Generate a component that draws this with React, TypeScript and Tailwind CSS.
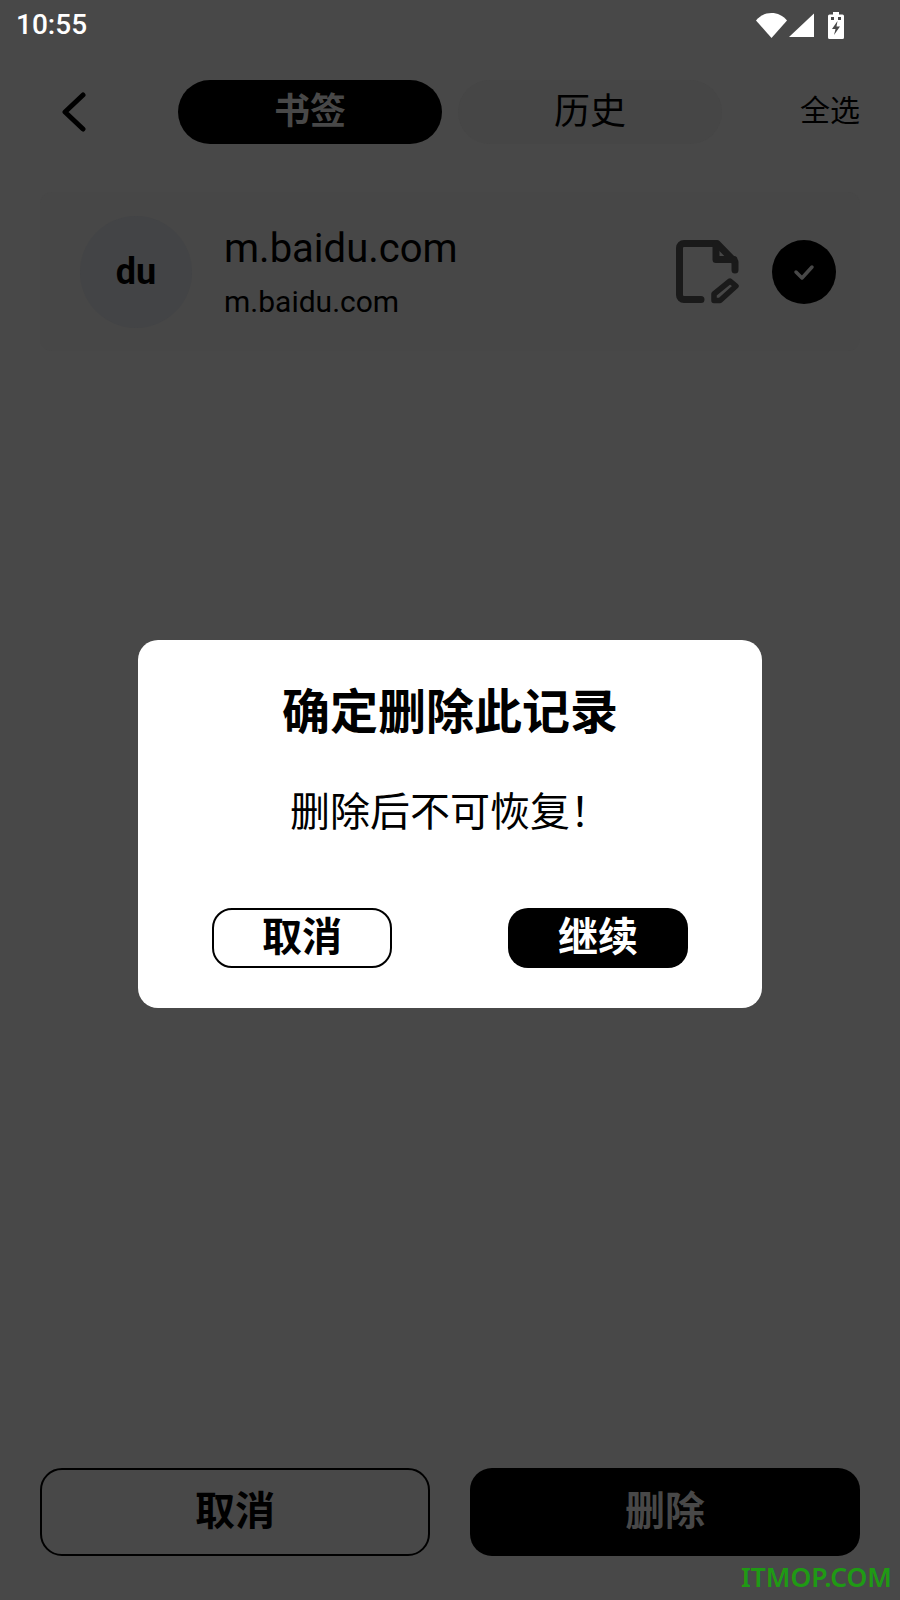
const cjk = "font-['Roboto','Noto_Sans_CJK_SC',sans-serif]";

function StatusIcons() {
  return (
    <div className="flex items-center">
      <svg width="31" height="26" viewBox="0 0 31 26">
        <path d="M0 8.500C4 3.500 9.500 1 15.500 1S27 3.500 31 8.500L15.500 26z" fill="#fff" />
      </svg>
      <svg width="25" height="26" viewBox="0 0 25 26" className="ml-[2px]">
        <path d="M25 1.500V25H0z" fill="#fff" />
      </svg>
      <svg width="16" height="27" viewBox="0 0 16 27" className="ml-[14px]">
        <path d="M5 0h6v2.500h3.500A1.500 1.500 0 0 1 16 4v21.500a1.500 1.500 0 0 1-1.500 1.500h-13A1.500 1.500 0 0 1 0 25.500V4a1.500 1.500 0 0 1 1.500-1.500H5z" fill="#fff" />
        <path d="M9.500 9 4 17h3.500L6 23l6-8.500H8.500z" fill="#484848" />
        <path d="M3 5h3v3H3zM10 5h3v3h-3z" fill="#484848" />
      </svg>
    </div>
  );
}

function BackIcon() {
  return (
    <svg width="24" height="40" viewBox="0 0 24 40" fill="none" stroke="#000" strokeWidth="5" strokeLinecap="round" strokeLinejoin="round">
      <path d="M21 3 3 20l18 17" />
    </svg>
  );
}

function FileEditIcon() {
  return (
    <svg width="64" height="64" viewBox="0 0 64 64" fill="none" stroke="#1a1a1a" strokeWidth="7" strokeLinecap="round" strokeLinejoin="round">
      <path d="M25 59.500H8a4.500 4.500 0 0 1-4.500-4.500V8A4.500 4.500 0 0 1 8 3.500h33L59 22v8" />
      <path d="M40 5v14.500h18" />
      <path strokeWidth="5.500" d="M38 60.500V54l16-13 6 5-16 14.500z" />
    </svg>
  );
}

export default function App() {
  return (
    <div className={`relative flex h-[1600px] w-[900px] flex-col overflow-hidden bg-[#484848] ${cjk}`}>
      {/* status bar */}
      <div className="flex h-[50px] items-center justify-between pr-[56px] pl-[16px]">
        <span className="text-[28px] leading-none font-medium text-white">10:55</span>
        <StatusIcons />
      </div>

      {/* header */}
      <div className="mt-[30px] flex h-[64px] items-center pr-[40px] pl-[62px]">
        <BackIcon />
        <div className="ml-[92px] flex gap-[16px]">
          <div className="flex h-[64px] w-[264px] items-center justify-center rounded-full bg-black text-[36px] font-bold text-[#484848]">书签</div>
          <div className="flex h-[64px] w-[264px] items-center justify-center rounded-full bg-[#464646] text-[36px] text-black">历史</div>
        </div>
        <span className="ml-auto pb-[4px] text-[30px] text-black">全选</span>
      </div>

      {/* bookmark row */}
      <div className="mx-[40px] mt-[48px] flex h-[159px] items-center rounded-[12px] bg-[#474747] pr-[24px] pl-[40px]">
        <div className="flex h-[112px] w-[112px] items-center justify-center rounded-full bg-[#434446] text-[36px] font-bold text-black">du</div>
        <div className="ml-[32px] flex flex-col pt-[4px]">
          <span className="text-[40px] leading-[48px] text-black">m.baidu.com</span>
          <span className="mt-[9px] text-[30px] leading-[40px] text-black">m.baidu.com</span>
        </div>
        <div className="ml-auto flex items-center gap-[32px]">
          <FileEditIcon />
          <div className="flex h-[64px] w-[64px] items-center justify-center rounded-full bg-black">
            <svg width="22" height="18" viewBox="0 0 22 18" fill="none" stroke="#484848" strokeWidth="3.500" strokeLinecap="round" strokeLinejoin="round">
              <path d="M3 9l6 6L19 4" />
            </svg>
          </div>
        </div>
      </div>

      {/* bottom actions */}
      <div className="mt-auto mb-[44px] flex justify-between px-[40px]">
        <div className="flex h-[88px] w-[390px] items-center justify-center rounded-[22px] border-2 border-black text-[40px] font-bold text-black">取消</div>
        <div className="flex h-[88px] w-[390px] items-center justify-center rounded-[22px] bg-black text-[40px] font-bold text-[#484848]">删除</div>
      </div>

      {/* dialog */}
      <div className="absolute top-[640px] left-[138px] flex h-[368px] w-[624px] flex-col items-center rounded-[20px] bg-white">
        <h2 className="mt-[38px] text-[48px] leading-[70px] font-bold text-black">确定删除此记录</h2>
        <p className="mt-[35px] text-[40px] leading-[60px] text-black">删除后不可恢复！</p>
        <div className="mt-[65px] flex w-full gap-[116px] px-[74px]">
          <div className="flex h-[60px] w-[180px] items-center justify-center rounded-[20px] border-2 border-black text-[40px] font-bold text-black">取消</div>
          <div className="flex h-[60px] w-[180px] items-center justify-center rounded-[20px] bg-black text-[40px] font-bold text-white">继续</div>
        </div>
      </div>

      {/* watermark */}
      <span className="absolute right-[8px] bottom-[10px] font-['Noto_Sans',sans-serif] text-[26.500px] leading-none font-semibold text-[#1f9a14]">ITMOP.COM</span>
    </div>
  );
}
